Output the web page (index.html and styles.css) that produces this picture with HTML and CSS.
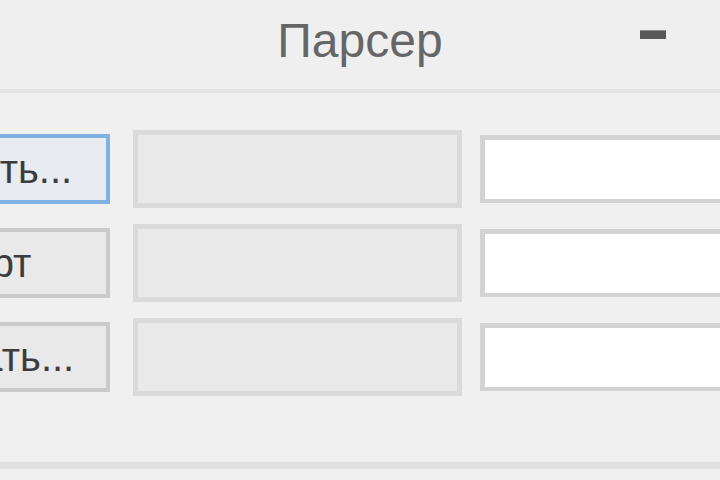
FILE: index.html
```html
<!DOCTYPE html>
<html lang="ru">
<head>
<meta charset="utf-8">
<title>Парсер</title>
<link rel="stylesheet" href="styles.css">
</head>
<body>
<div class="window">
  <header class="titlebar">
    <span class="spacer"></span>
    <span class="title">Парсер</span>
    <span class="controls"><span class="minimize"></span></span>
  </header>
  <main class="content">
    <div class="rows">
      <button class="btn focused">Открыть...</button>
      <div class="field disabled"></div>
      <div class="field input"></div>

      <button class="btn">Старт</button>
      <div class="field disabled"></div>
      <div class="field input"></div>

      <button class="btn">Выбрать...</button>
      <div class="field disabled"></div>
      <div class="field input"></div>
    </div>
  </main>
  <footer class="footer"></footer>
</div>
</body>
</html>
```

FILE: styles.css
```css
html, body {
  margin: 0;
  padding: 0;
  width: 720px;
  height: 480px;
  overflow: hidden;
  background: #f0f0f0;
}

.window {
  width: 720px;
  height: 480px;
  overflow: hidden;
  font-family: "Liberation Sans", Arial, sans-serif;
  background: #f0f0f0;
}

.titlebar {
  display: grid;
  grid-template-columns: 1fr auto 1fr;
  align-items: start;
  height: 93px;
  box-sizing: border-box;
  padding-top: 17px;
  background: #efefef;
  border-bottom: 4px solid #e3e3e3;
}

.title {
  font-size: 48px;
  line-height: 48px;
  color: #666666;
}

.controls {
  display: flex;
  justify-content: flex-end;
  padding-right: 54px;
  padding-top: 13px;
}

.minimize {
  display: block;
  width: 26px;
  height: 8px;
  background: #585858;
  border-top: 1px solid #8a8a8a;
}

.content {
  padding-top: 37px;
}

.rows {
  display: grid;
  grid-template-columns: 266px 329px 260px;
  grid-auto-rows: 78px;
  column-gap: 23px;
  row-gap: 16px;
  margin-left: -156px;
  align-items: center;
}

.rows .field.input {
  margin-left: -5px;
}

.btn {
  height: 70px;
  box-sizing: border-box;
  border: 4px solid #cacaca;
  background: #e9e9e9;
  font-family: "Liberation Sans", Arial, sans-serif;
  font-size: 40px;
  color: #3c3c3c;
  padding: 0;
  text-align: center;
  white-space: nowrap;
}

.btn.focused {
  border-color: #7fb2e3;
  background: #e8ecf1;
}

.field {
  box-sizing: border-box;
}

.field.disabled {
  height: 78px;
  border: 5px solid #dadada;
  background: #e9e9e9;
}

.field.input {
  height: 68px;
  border: 5px solid #d3d3d3;
  border-bottom-width: 4px;
  background: #ffffff;
}

.footer {
  margin-top: 66px;
  height: 7px;
  background: #e1e1e1;
}
```
